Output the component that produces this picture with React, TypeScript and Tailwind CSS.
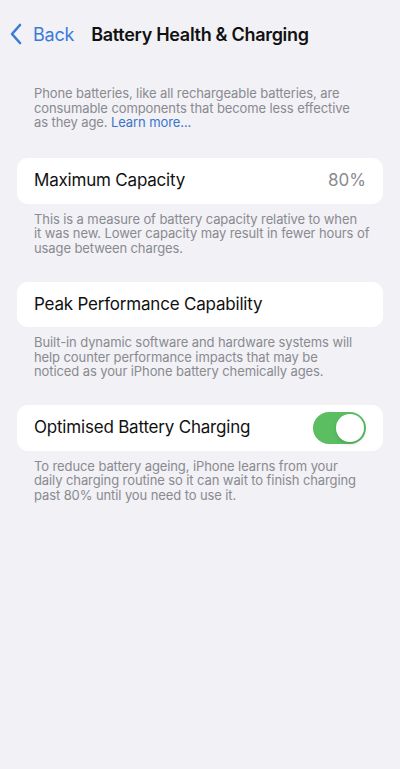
import React from "react";

function Chevron() {
  return (
    <svg width="14" height="22" viewBox="0 0 14 22" fill="none">
      <path d="M11 2 L3 11 L11 20" stroke="#3b7bd8" strokeWidth="2.6" strokeLinecap="round" strokeLinejoin="round" />
    </svg>
  );
}

const foot = "px-[34px] text-[13px] leading-[14.5px] text-[#8a8a8f] tracking-[-0.1px] whitespace-nowrap";

export default function App() {
  return (
    <div className="w-[400px] h-[769px] bg-[#f1f1f6] font-['Inter',sans-serif] overflow-hidden">
      <div className="h-[68px] flex items-center pl-[9px]">
        <Chevron />
        <span className="ml-[10px] text-[18px] text-[#3b7bd8] tracking-[-0.2px]">Back</span>
        <span className="ml-[17px] text-[18px] font-semibold text-[#111] tracking-[-0.3px]">Battery Health &amp; Charging</span>
      </div>
      <p className={"mt-[18px] " + foot}>
        Phone batteries, like all rechargeable batteries, are<br />
        consumable components that become less effective<br />
        as they age. <span className="text-[#3b74c9]">Learn more...</span>
      </p>

      <div className="mt-[28px] mx-[17px] h-[46px] bg-white rounded-[11px] flex items-center justify-between pl-[17px] pr-[17px]">
        <span className="text-[17px] text-[#111] tracking-[-0.2px]">Maximum Capacity</span>
        <span className="text-[17px] text-[#8a8a8f]">80%</span>
      </div>
      <p className={"mt-[8px] " + foot}>
        This is a measure of battery capacity relative to when<br />
        it was new. Lower capacity may result in fewer hours of<br />
        usage between charges.
      </p>

      <div className="mt-[27px] mx-[17px] h-[45px] bg-white rounded-[11px] flex items-center pl-[17px]">
        <span className="text-[17px] text-[#111] tracking-[-0.2px]">Peak Performance Capability</span>
      </div>
      <p className={"mt-[8px] " + foot}>
        Built-in dynamic software and hardware systems will<br />
        help counter performance impacts that may be<br />
        noticed as your iPhone battery chemically ages.
      </p>

      <div className="mt-[26px] mx-[17px] h-[46px] bg-white rounded-[11px] flex items-center justify-between pl-[17px] pr-[17px]">
        <span className="text-[17px] text-[#111] tracking-[-0.2px]">Optimised Battery Charging</span>
        <div className="w-[53px] h-[32px] rounded-full bg-[#5bbf62] flex items-center justify-end pr-[2px]">
          <div className="w-[28px] h-[28px] rounded-full bg-white shadow-[0_2px_4px_rgba(0,0,0,0.15)]" />
        </div>
      </div>
      <p className={"mt-[8px] " + foot}>
        To reduce battery ageing, iPhone learns from your<br />
        daily charging routine so it can wait to finish charging<br />
        past 80% until you need to use it.
      </p>
    </div>
  );
}
